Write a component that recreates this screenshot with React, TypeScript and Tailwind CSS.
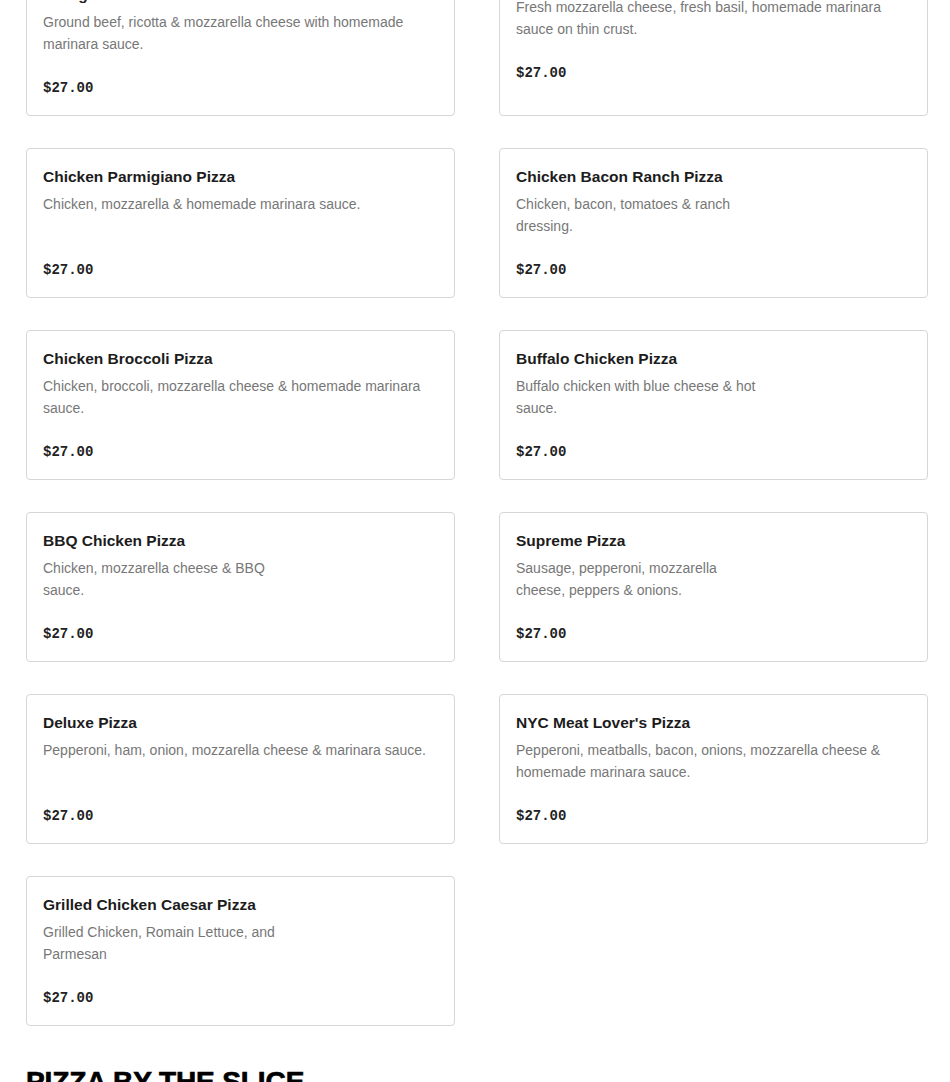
type Item = {
  name: string;
  lines: string[];
  tight?: boolean;
};

const rows: Item[][] = [
  [
    { name: 'Lasagna Pizza', lines: ['Ground beef, ricotta & mozzarella cheese with homemade', 'marinara sauce.'] },
    { name: 'Margherita Pizza', lines: ['Fresh mozzarella cheese, fresh basil, homemade marinara', 'sauce on thin crust.'], tight: true },
  ],
  [
    { name: 'Chicken Parmigiano Pizza', lines: ['Chicken, mozzarella & homemade marinara sauce.'] },
    { name: 'Chicken Bacon Ranch Pizza', lines: ['Chicken, bacon, tomatoes & ranch', 'dressing.'] },
  ],
  [
    { name: 'Chicken Broccoli Pizza', lines: ['Chicken, broccoli, mozzarella cheese & homemade marinara', 'sauce.'] },
    { name: 'Buffalo Chicken Pizza', lines: ['Buffalo chicken with blue cheese & hot', 'sauce.'] },
  ],
  [
    { name: 'BBQ Chicken Pizza', lines: ['Chicken, mozzarella cheese & BBQ', 'sauce.'] },
    { name: 'Supreme Pizza', lines: ['Sausage, pepperoni, mozzarella', 'cheese, peppers & onions.'] },
  ],
  [
    { name: 'Deluxe Pizza', lines: ['Pepperoni, ham, onion, mozzarella cheese & marinara sauce.'] },
    { name: "NYC Meat Lover's Pizza", lines: ['Pepperoni, meatballs, bacon, onions, mozzarella cheese &', 'homemade marinara sauce.'] },
  ],
  [
    { name: 'Grilled Chicken Caesar Pizza', lines: ['Grilled Chicken, Romain Lettuce, and', 'Parmesan'] },
  ],
];

function MenuCard({ item }: { item: Item }) {
  return (
    <div
      className={`bg-white border border-[#d6d6d6] rounded-[4px] px-[16px] pb-[17px] ${item.tight ? 'pt-[3px]' : 'pt-[18px]'}`}
    >
      <h3 className="text-[15.5px] leading-[20px] font-bold text-[#1c1c1c]">{item.name}</h3>
      <p className="mt-[6px] min-h-[44px] text-[14px] leading-[22px] text-[#777]">
        {item.lines.map((l, i) => (
          <span key={i} className="block">
            {l}
          </span>
        ))}
      </p>
      <div className="mt-[23px] font-['Liberation_Mono',monospace] text-[14px] leading-[20px] font-bold text-[#222]">
        $27.00
      </div>
    </div>
  );
}

export default function App() {
  return (
    <main className="min-h-screen bg-white pl-[26px] pr-[22px] font-['Liberation_Sans',Arial,sans-serif] overflow-hidden">
      <div className="mt-[-34px] grid grid-cols-2 gap-x-[44px] gap-y-[32px]">
        {rows.flat().map((item) => (
          <MenuCard key={item.name} item={item} />
        ))}
      </div>
      <h2 className="mt-[42px] text-[28px] leading-[28px] font-black tracking-[-0.1px] text-black [-webkit-text-stroke:0.7px_black]">
        PIZZA BY THE SLICE
      </h2>
    </main>
  );
}
